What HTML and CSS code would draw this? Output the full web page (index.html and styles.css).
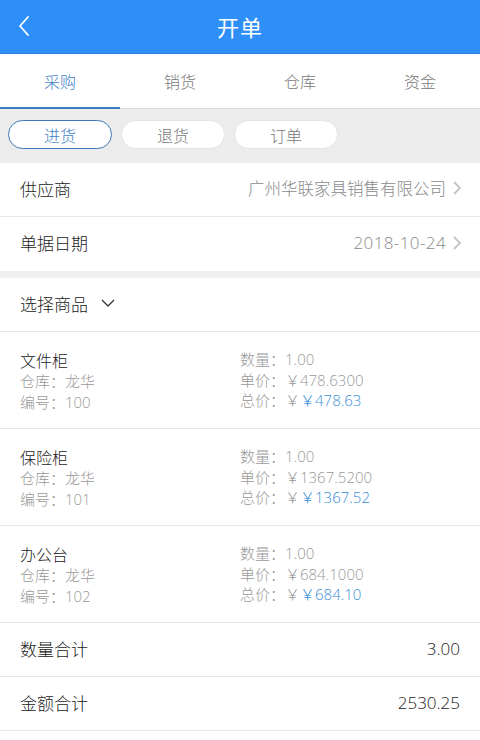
FILE: index.html
```html
<!DOCTYPE html>
<html lang="zh">
<head>
<meta charset="utf-8">
<title>开单</title>
<link rel="stylesheet" href="styles.css">
</head>
<body>
<div class="page">
  <header class="nav">
    <span class="back">
      <svg width="14" height="22" viewBox="0 0 14 22"><path d="M11 2 L3 11 L11 20" fill="none" stroke="#fff" stroke-width="1.8" stroke-linecap="round" stroke-linejoin="round"/></svg>
    </span>
    <h1 class="title">开单</h1>
  </header>
  <nav class="tabs">
    <div class="tab active">采购</div>
    <div class="tab">销货</div>
    <div class="tab">仓库</div>
    <div class="tab">资金</div>
  </nav>
  <div class="seg">
    <div class="pill active">进货</div>
    <div class="pill">退货</div>
    <div class="pill">订单</div>
  </div>
  <div class="group">
    <div class="row">
      <span class="label">供应商</span>
      <span class="value">广州华联家具销售有限公司<svg class="chev" width="10" height="16" viewBox="0 0 10 16"><path d="M2 2 L8 8 L2 14" fill="none" stroke="#c4c4c4" stroke-width="1.8"/></svg></span>
    </div>
    <div class="row">
      <span class="label">单据日期</span>
      <span class="value date">2018-10-24<svg class="chev" width="10" height="16" viewBox="0 0 10 16"><path d="M2 2 L8 8 L2 14" fill="none" stroke="#c4c4c4" stroke-width="1.8"/></svg></span>
    </div>
  </div>
  <div class="group2">
    <div class="row">
      <span class="label">选择商品<svg class="down" width="16" height="10" viewBox="0 0 16 10"><path d="M2 2 L8 8 L14 2" fill="none" stroke="#333" stroke-width="1.3"/></svg></span>
    </div>
    <div class="item">
      <div class="col">
        <div class="name">文件柜</div>
        <div class="sub">仓库：龙华</div>
        <div class="sub">编号：100</div>
      </div>
      <div class="col right">
        <div class="sub">数量：1.00</div>
        <div class="sub">单价：￥478.6300</div>
        <div class="sub">总价：￥<span class="blue">￥478.63</span></div>
      </div>
    </div>
    <div class="item">
      <div class="col">
        <div class="name">保险柜</div>
        <div class="sub">仓库：龙华</div>
        <div class="sub">编号：101</div>
      </div>
      <div class="col right">
        <div class="sub">数量：1.00</div>
        <div class="sub">单价：￥1367.5200</div>
        <div class="sub">总价：￥<span class="blue">￥1367.52</span></div>
      </div>
    </div>
    <div class="item">
      <div class="col">
        <div class="name">办公台</div>
        <div class="sub">仓库：龙华</div>
        <div class="sub">编号：102</div>
      </div>
      <div class="col right">
        <div class="sub">数量：1.00</div>
        <div class="sub">单价：￥684.1000</div>
        <div class="sub">总价：￥<span class="blue">￥684.10</span></div>
      </div>
    </div>
    <div class="row">
      <span class="label">数量合计</span>
      <span class="num">3.00</span>
    </div>
    <div class="row">
      <span class="label">金额合计</span>
      <span class="num">2530.25</span>
    </div>
  </div>
</div>
</body>
</html>
```
FILE: styles.css
```css
* { box-sizing: border-box; }
html, body { margin: 0; padding: 0; }
body {
  font-family: "Open Sans", "Noto Sans CJK SC", sans-serif;
  font-weight: 300;
  background: #fff;
  color: #222;
  width: 480px;
  height: 740px;
  overflow: hidden;
}
.nav {
  height: 54px;
  background: #2f8ff8;
  border-bottom: 1px solid #2a7fe0;
  display: flex;
  align-items: center;
  justify-content: center;
  position: relative;
  padding-bottom: 2px;
}
.back {
  position: absolute;
  left: 17px;
  top: 15px;
  display: flex;
}
.title {
  margin: 0;
  color: #fff;
  font-size: 22px;
  font-weight: 400;
  letter-spacing: 1px;
}
.tabs {
  display: flex;
  height: 55px;
  background: #fff;
  border-bottom: 1px solid #dcdcdc;
}
.tab {
  flex: 1;
  display: flex;
  align-items: center;
  justify-content: center;
  font-size: 16px;
  color: #777;
  padding-bottom: 1px;
}
.tab.active {
  color: #3b7ec6;
  border-bottom: 2px solid #3b7ec6;
  margin-bottom: -1px;
  padding-top: 1px;
}
.seg {
  height: 54px;
  background: #ececec;
  display: flex;
  align-items: center;
  padding: 0 8px 3px;
  gap: 9px;
}
.pill {
  width: 104px;
  height: 29px;
  border-radius: 15px;
  background: #fff;
  border: 1px solid #e4e4e4;
  display: flex;
  align-items: center;
  justify-content: center;
  font-size: 16px;
  color: #777;
}
.pill.active {
  border-color: #3d78b8;
  color: #3b7ec6;
}
.group {
  border-bottom: 7px solid #efefef;
}
.row {
  height: 54px;
  display: flex;
  align-items: center;
  justify-content: space-between;
  padding: 0 20px 3px;
  border-bottom: 1px solid #e6e6e6;
}
.group .row:last-child { border-bottom: none; }
.label {
  font-size: 17px;
  color: #222;
  display: flex;
  align-items: center;
}
.value {
  font-size: 16.5px;
  color: #8a8a8a;
  display: flex;
  align-items: center;
  margin-right: -2px;
}
.value.date {
  font-size: 17px;
  letter-spacing: 0.4px;
}
.chev { margin-left: 6px; }
.down { margin-left: 12px; }
.num {
  font-size: 17px;
  color: #222;
}
.item {
  display: flex;
  padding: 17px 20px 16px;
  border-bottom: 1px solid #e6e6e6;
  height: 97px;
}
.col { width: 220px; display: flex; flex-direction: column; }
.col.right { width: auto; padding-top: 0; }
.name {
  font-size: 16px;
  color: #222;
  line-height: 20px;
  margin-top: 2px;
}
.sub {
  font-size: 15px;
  color: #999;
  line-height: 20.5px;
}
.blue { color: #3a8fd8; }
```
